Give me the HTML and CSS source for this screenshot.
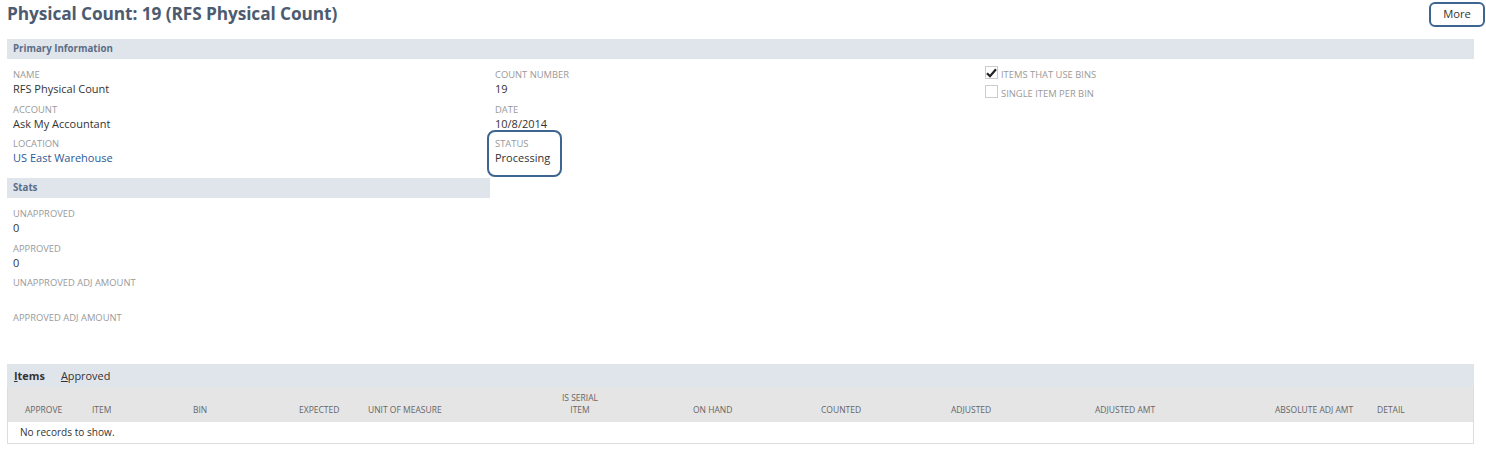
FILE: index.html
```html
<!DOCTYPE html>
<html>
<head>
<meta charset="utf-8">
<link rel="stylesheet" href="styles.css">
</head>
<body>
<div class="page">
  <div class="titlebar">
    <h1 class="title">Physical Count: 19 (RFS Physical Count)</h1>
    <button class="more">More</button>
  </div>

  <div class="section-head">Primary Information</div>
  <div class="primary">
    <div class="col">
      <div class="field"><div class="label">NAME</div><div class="value">RFS Physical Count</div></div>
      <div class="field"><div class="label">ACCOUNT</div><div class="value">Ask My Accountant</div></div>
      <div class="field"><div class="label">LOCATION</div><div class="value link">US East Warehouse</div></div>
    </div>
    <div class="col">
      <div class="field"><div class="label">COUNT NUMBER</div><div class="value">19</div></div>
      <div class="field"><div class="label">DATE</div><div class="value">10/8/2014</div></div>
      <div class="field status"><div class="label">STATUS</div><div class="value">Processing</div></div>
    </div>
    <div class="col checks">
      <div class="check"><span class="box checked"><svg width="11" height="10" viewBox="0 0 11 10"><path d="M1 5.2 L4 8.2 L10 1.2" fill="none" stroke="#222" stroke-width="2.2"/></svg></span><span class="clabel">ITEMS THAT USE BINS</span></div>
      <div class="check"><span class="box"></span><span class="clabel">SINGLE ITEM PER BIN</span></div>
    </div>
  </div>

  <div class="section-head half">Stats</div>
  <div class="stats">
    <div class="field"><div class="label">UNAPPROVED</div><div class="value">0</div></div>
    <div class="field"><div class="label">APPROVED</div><div class="value">0</div></div>
    <div class="field"><div class="label">UNAPPROVED ADJ AMOUNT</div><div class="value">&nbsp;</div></div>
    <div class="field"><div class="label">APPROVED ADJ AMOUNT</div><div class="value">&nbsp;</div></div>
  </div>

  <div class="tabs">
    <span class="tab active"><u>I</u>tems</span>
    <span class="tab"><u>A</u>pproved</span>
  </div>
  <div class="grid">
    <div class="ghead">
      <div class="gc c1">APPROVE</div>
      <div class="gc c2">ITEM</div>
      <div class="gc c3">BIN</div>
      <div class="gc c4">EXPECTED</div>
      <div class="gc c5">UNIT OF MEASURE</div>
      <div class="gc c6">IS SERIAL<br>ITEM</div>
      <div class="gc c7">ON HAND</div>
      <div class="gc c8">COUNTED</div>
      <div class="gc c9">ADJUSTED</div>
      <div class="gc c10">ADJUSTED AMT</div>
      <div class="gc c11">ABSOLUTE ADJ AMT</div>
      <div class="gc c12">DETAIL</div>
    </div>
    <div class="grow">No records to show.</div>
  </div>
</div>
</body>
</html>
```

FILE: styles.css
```css
* { box-sizing: border-box; }
body {
  margin: 0;
  background: #fff;
  font-family: "Open Sans", "Liberation Sans", sans-serif;
  color: #333;
}
.page {
  padding: 0 12px 0 7px;
}
.titlebar {
  display: flex;
  justify-content: space-between;
  align-items: flex-start;
  height: 39px;
}
.title {
  margin: 0;
  padding-top: 2px;
  font-size: 17.3px;
  font-weight: 700;
  color: #4d5b70;
  letter-spacing: -0.1px;
}
.more {
  margin-top: 2px;
  margin-right: -11px;
  width: 56px;
  height: 25px;
  border: 2px solid #3e6590;
  border-radius: 6px;
  background: #fff;
  font-family: "Open Sans", "Liberation Sans", sans-serif;
  font-size: 11.2px;
  color: #333;
  padding: 0 0 2px;
}
.section-head {
  height: 20px;
  background: #e0e5ec;
  color: #5b6d87;
  font-size: 9.7px;
  font-weight: 700;
  line-height: 20px;
  padding-left: 6px;
}
.section-head.half { width: 483px; }
.primary {
  display: grid;
  grid-template-columns: 482px 490px 1fr;
  padding: 9px 0 0 6px;
  height: 119px;
}
.field { height: 34.5px; }
.label {
  font-size: 9.4px;
  color: #999;
  line-height: 14px;
  height: 13px;
}
.value {
  font-size: 11px;
  line-height: 15px;
  color: #333;
}
.value.link { color: #2b5a96; }
.status {
  border: 2px solid #3e6590;
  border-radius: 8px;
  width: 75px;
  height: 47px;
  margin: -7px 0 0 -8px;
  padding: 5px 0 0 6px;
}
.checks { margin-top: -5px; }
.check {
  display: flex;
  align-items: center;
  height: 19px;
}
.box {
  width: 13px;
  height: 13px;
  border: 1px solid #ccc;
  margin-right: 3px;
  display: flex;
  align-items: center;
  justify-content: center;
  background: #fff;
}
.clabel {
  font-size: 9.4px;
  color: #999;
  padding-top: 3px;
}
.stats {
  padding: 9px 0 0 6px;
  height: 166px;
}
.tabs {
  height: 23px;
  background: #e0e5ec;
  display: flex;
  align-items: center;
  padding-left: 7px;
  gap: 16px;
  font-size: 10.9px;
  color: #333;
}
.tab.active { font-weight: 700; color: #333; position: relative; }
.tab.active::after {
  content: "";
  position: absolute;
  left: 11px;
  bottom: -6px;
  width: 0;
  height: 0;
  border-left: 5px solid transparent;
  border-right: 5px solid transparent;
  border-bottom: 4px solid #e5e5e5;
}
.grid {
  border: 1px solid #ddd;
  border-top: none;
}
.ghead {
  display: grid;
  grid-template-columns: 17px 67px 101px 106px 69px 172px 153px 128px 130px 144px 180px 102px 1fr;
  background: #e5e5e5;
  height: 35px;
  font-size: 8.5px;
  color: #666;
  align-items: end;
  padding-bottom: 6px;
}
.gc { line-height: 12px; }
.c1 { grid-column: 2; }
.c6 { text-align: center; padding-right: 73px; }
.grow {
  height: 21px;
  font-size: 10.1px;
  line-height: 21px;
  padding-left: 12px;
  color: #333;
}
```
